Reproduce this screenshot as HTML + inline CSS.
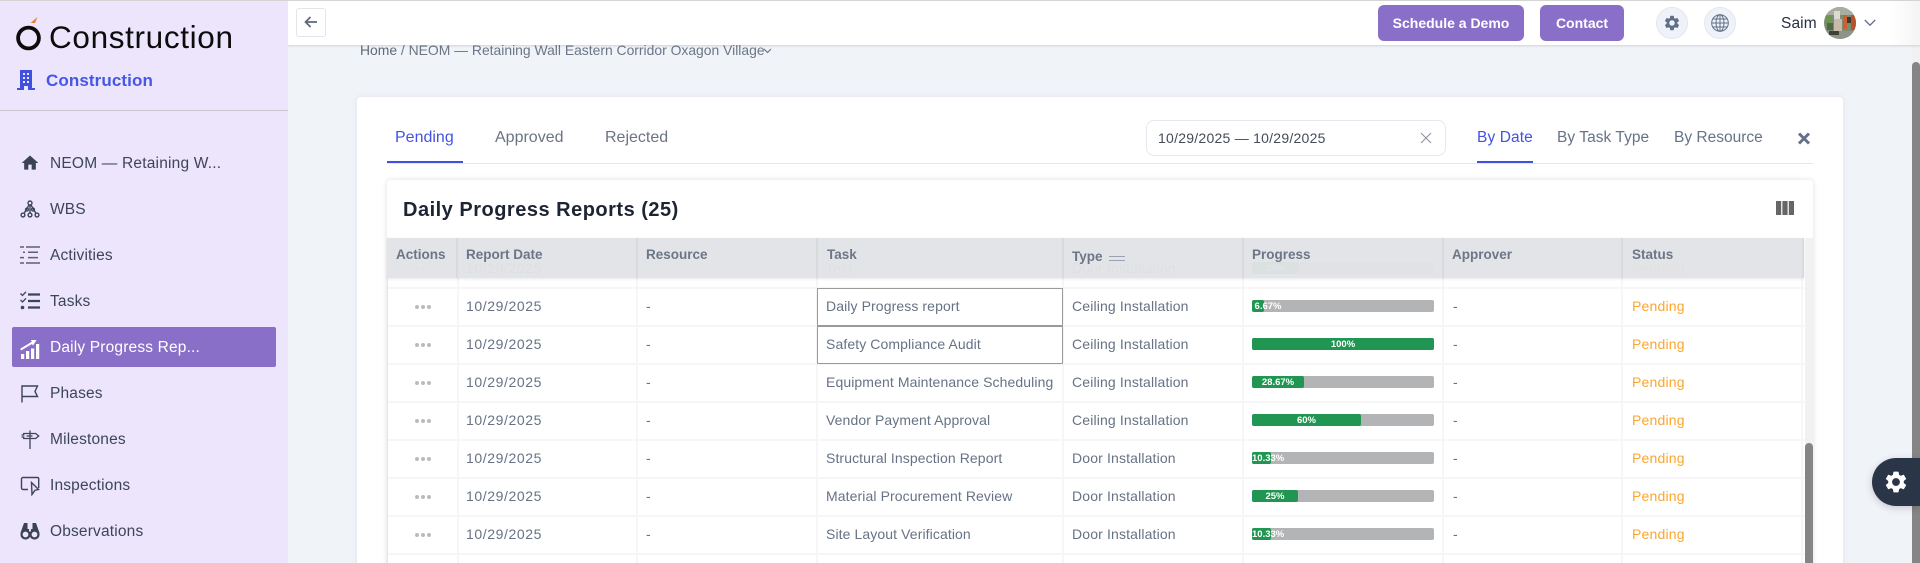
<!DOCTYPE html>
<html><head><meta charset="utf-8"><title>Daily Progress Reports</title>
<style>
html,body{margin:0;padding:0;width:1920px;height:563px;overflow:hidden;background:#f0f3f8;font-family:"Liberation Sans",sans-serif}
div,span,svg{position:absolute;box-sizing:border-box}
#root{left:0;top:0;width:1920px;height:563px;overflow:hidden;background:#f0f3f8}
.t{white-space:nowrap;line-height:20px;height:20px}
.nav{left:50px;font-size:15.5px;color:#3d4558;white-space:nowrap;line-height:20px;height:20px;letter-spacing:.17px}
.ic{left:20px;width:20px;height:20px}
.tab{top:128px;font-size:16px;color:#6b7482;white-space:nowrap;line-height:20px}
.tr{top:128px;font-size:15.5px;color:#667389;white-space:nowrap;line-height:20px}
.th{top:245px;font-size:13.5px;font-weight:bold;color:#6c7687;white-space:nowrap;line-height:20px}
.r{left:387px;width:1418px;height:38px;font-size:14px;color:#667285;line-height:36px;white-space:nowrap}
.r span{top:0;white-space:nowrap}
.a{left:79px;letter-spacing:.6px}.b{left:259px}.c{left:439px;letter-spacing:.1px}.d{left:685px;letter-spacing:.15px}.e{left:1066px}
.s{left:1245px;color:#fba62f;letter-spacing:.2px}
.g{left:865px;top:12px;width:182px;height:12px;background:#b3b4b5;border-radius:2px}
.f{left:0;top:0;height:12px;background:#219653;border-radius:2px}
.l{left:0;top:0;height:12px;line-height:13px;font-size:9.5px;font-weight:bold;color:#fff;text-align:center;white-space:nowrap}
.o{left:28px;top:17px;width:4px;height:4px;border-radius:50%;background:#bbb;box-shadow:6px 0 0 #bbb,12px 0 0 #bbb}
.v{top:238px;width:2px;height:325px;background:#f6f6f6}
.h{left:387px;width:1418px;height:2px;background:#f6f6f6}
.hs{top:238px;width:2px;height:40px;background:#d8dadd}
</style></head><body>
<div id="root">

<!-- main area -->
<div style="left:360px;top:40px;font-size:13.9px;color:#6b7687;line-height:20px;white-space:nowrap"><b style="font-weight:normal;color:#5f6a7a">Home</b> / NEOM — Retaining Wall Eastern Corridor Oxagon Village</div>
<svg style="left:763px;top:48px" width="9" height="6" viewBox="0 0 9 6"><path d="M1 1l3.5 3.5L8 1" fill="none" stroke="#6b7687" stroke-width="1.2"/></svg>

<!-- page scrollbar -->
<div style="left:1912px;top:45px;width:8px;height:518px;background:#f1f1f1"></div>
<div style="left:1912px;top:62px;width:8px;height:501px;background:#858585;border-radius:4px 4px 0 0"></div>

<!-- outer card -->
<div style="left:357px;top:97px;width:1486px;height:480px;background:#fff;border-radius:4px;box-shadow:0 0 6px rgba(60,70,110,.08)"></div>
<div style="left:387px;top:163px;width:1426px;height:1px;background:#e3e6f0"></div>
<div class="tab" style="left:395px;color:#4353e0">Pending</div>
<div style="left:387px;top:161px;width:76px;height:2px;background:#3f51e5"></div>
<div class="tab" style="left:495px">Approved</div>
<div class="tab" style="left:605px">Rejected</div>

<div style="left:1146px;top:120px;width:300px;height:36px;border:1px solid #e6e8ef;border-radius:8px;background:#fff"></div>
<div class="t" style="left:1158px;top:128px;font-size:14px;color:#444b57;letter-spacing:.25px">10/29/2025 — 10/29/2025</div>
<svg style="left:1420px;top:132px" width="12" height="12" viewBox="0 0 12 12"><path d="M1 1l10 10M11 1L1 11" stroke="#8a8f99" stroke-width="1"/></svg>

<div class="tr" style="left:1477px;color:#4353e0;letter-spacing:.1px">By Date</div>
<div style="left:1477px;top:161px;width:56px;height:2px;background:#3f51e5"></div>
<div class="tr" style="left:1557px;letter-spacing:.05px">By Task Type</div>
<div class="tr" style="left:1674px">By Resource</div>
<svg style="left:1797px;top:132px" width="14" height="13" viewBox="0 0 14 13"><path d="M2 1.5l10 10M12 1.5l-10 10" stroke="#65718a" stroke-width="3"/></svg>

<!-- inner card -->
<div style="left:387px;top:180px;width:1426px;height:400px;background:#fff;border-radius:4px;box-shadow:0 0 6px rgba(0,0,0,.13)"></div>
<div class="t" style="left:403px;top:198px;height:24px;line-height:24px;font-size:20px;font-weight:bold;color:#1d2433;letter-spacing:.5px">Daily Progress Reports (25)</div>
<svg style="left:1776px;top:201px" width="18" height="14" viewBox="0 0 18 14" fill="#666"><rect x="0" y="0" width="5.2" height="14"/><rect x="6.4" y="0" width="5.2" height="14"/><rect x="12.8" y="0" width="5.2" height="14"/></svg>

<!-- table grid lines -->
<div class="v" style="left:457px"></div><div class="v" style="left:636px"></div><div class="v" style="left:816px"></div><div class="v" style="left:1062px"></div><div class="v" style="left:1242px"></div><div class="v" style="left:1442px"></div><div class="v" style="left:1621px"></div><div class="v" style="left:1801px"></div>
<div class="h" style="top:287px"></div><div class="h" style="top:325px"></div><div class="h" style="top:363px"></div><div class="h" style="top:401px"></div><div class="h" style="top:439px"></div><div class="h" style="top:477px"></div><div class="h" style="top:515px"></div><div class="h" style="top:553px"></div>
<div style="left:387px;top:238px;width:1px;height:325px;background:#e4e4e4"></div>

<!-- row behind the sticky header -->
<div class="r" style="top:250px"><i class="o" style="position:absolute"></i><span class="a">10/29/2025</span><span class="b">-</span><span class="c">Test</span><span class="d">Door Installation</span><div class="g"><div class="f" style="width:46px"></div><div class="l" style="width:46px">25%</div></div><span class="e">-</span><span class="s">Pending</span></div>

<!-- rows -->
<div class="r" style="top:288px"><i class="o" style="position:absolute"></i><span class="a">10/29/2025</span><span class="b">-</span><span class="c">Daily Progress report</span><span class="d">Ceiling Installation</span><div class="g"><div class="f" style="width:12px"></div><div class="l" style="width:32px">6.67%</div></div><span class="e">-</span><span class="s">Pending</span></div>
<div class="r" style="top:326px"><i class="o" style="position:absolute"></i><span class="a">10/29/2025</span><span class="b">-</span><span class="c">Safety Compliance Audit</span><span class="d">Ceiling Installation</span><div class="g"><div class="f" style="width:182px"></div><div class="l" style="width:182px">100%</div></div><span class="e">-</span><span class="s">Pending</span></div>
<div class="r" style="top:364px"><i class="o" style="position:absolute"></i><span class="a">10/29/2025</span><span class="b">-</span><span class="c">Equipment Maintenance Scheduling</span><span class="d">Ceiling Installation</span><div class="g"><div class="f" style="width:52px"></div><div class="l" style="width:52px">28.67%</div></div><span class="e">-</span><span class="s">Pending</span></div>
<div class="r" style="top:402px"><i class="o" style="position:absolute"></i><span class="a">10/29/2025</span><span class="b">-</span><span class="c">Vendor Payment Approval</span><span class="d">Ceiling Installation</span><div class="g"><div class="f" style="width:109px"></div><div class="l" style="width:109px">60%</div></div><span class="e">-</span><span class="s">Pending</span></div>
<div class="r" style="top:440px"><i class="o" style="position:absolute"></i><span class="a">10/29/2025</span><span class="b">-</span><span class="c">Structural Inspection Report</span><span class="d">Door Installation</span><div class="g"><div class="f" style="width:19px"></div><div class="l" style="width:32px">10.33%</div></div><span class="e">-</span><span class="s">Pending</span></div>
<div class="r" style="top:478px"><i class="o" style="position:absolute"></i><span class="a">10/29/2025</span><span class="b">-</span><span class="c">Material Procurement Review</span><span class="d">Door Installation</span><div class="g"><div class="f" style="width:46px"></div><div class="l" style="width:46px">25%</div></div><span class="e">-</span><span class="s">Pending</span></div>
<div class="r" style="top:516px"><i class="o" style="position:absolute"></i><span class="a">10/29/2025</span><span class="b">-</span><span class="c">Site Layout Verification</span><span class="d">Door Installation</span><div class="g"><div class="f" style="width:19px"></div><div class="l" style="width:32px">10.33%</div></div><span class="e">-</span><span class="s">Pending</span></div>

<!-- task cell outlines -->
<div style="left:817px;top:288px;width:246px;height:39px;border:1px solid #9a9a9a;border-bottom-width:2px"></div>
<div style="left:817px;top:326px;width:246px;height:38px;border:1px solid #9a9a9a;border-top:0"></div>

<!-- header row -->
<div style="left:387px;top:238px;width:1417px;height:40px;background:rgba(225,227,230,.97);box-shadow:0 1px 3px rgba(0,0,0,.1)"></div>
<div class="hs" style="left:456px"></div><div class="hs" style="left:636px"></div><div class="hs" style="left:816px"></div><div class="hs" style="left:1062px"></div><div class="hs" style="left:1242px"></div><div class="hs" style="left:1442px"></div><div class="hs" style="left:1621px"></div><div class="hs" style="left:1802px"></div>
<div class="th" style="left:396px">Actions</div>
<div class="th" style="left:466px">Report Date</div>
<div class="th" style="left:646px">Resource</div>
<div class="th" style="left:827px">Task</div>
<div class="th" style="left:1072px;top:247px">Type</div>
<div style="left:1109px;top:256px;width:16px;height:5px;border-top:1.5px solid #9aa2ad;border-bottom:1.5px solid #9aa2ad"></div>
<div class="th" style="left:1252px">Progress</div>
<div class="th" style="left:1452px">Approver</div>
<div class="th" style="left:1632px">Status</div>

<!-- inner scrollbar -->
<div style="left:1805px;top:238px;width:8px;height:325px;background:#f1f1f1"></div>
<div style="left:1805px;top:443px;width:8px;height:120px;background:#858585;border-radius:4px 4px 0 0"></div>

<!-- floating settings -->
<div style="left:1872px;top:458px;width:48px;height:48px;background:#2b3548;border-radius:24px 0 0 24px;box-shadow:0 2px 8px rgba(0,0,0,.18)"></div>
<svg style="left:1883px;top:469px" width="26" height="26" viewBox="0 0 24 24"><path fill="#fff" d="M19.14 12.94c.04-.3.06-.61.06-.94 0-.32-.02-.64-.07-.94l2.03-1.58c.18-.14.23-.41.12-.61l-1.92-3.32c-.12-.22-.37-.29-.59-.22l-2.39.96c-.5-.38-1.03-.7-1.62-.94l-.36-2.54c-.04-.24-.24-.41-.48-.41h-3.84c-.24 0-.43.17-.47.41l-.36 2.54c-.59.24-1.13.57-1.62.94l-2.39-.96c-.22-.08-.47 0-.59.22L2.74 8.87c-.12.21-.08.47.12.61l2.03 1.58c-.05.3-.09.63-.09.94s.02.64.07.94l-2.03 1.58c-.18.14-.23.41-.12.61l1.92 3.32c.12.22.37.29.59.22l2.39-.96c.5.38 1.03.7 1.62.94l.36 2.54c.05.24.24.41.48.41h3.84c.24 0 .44-.17.47-.41l.36-2.54c.59-.24 1.13-.56 1.62-.94l2.39.96c.22.08.47 0 .59-.22l1.92-3.32c.12-.22.07-.47-.12-.61l-2.01-1.58zM12 15.6c-1.98 0-3.6-1.62-3.6-3.6s1.62-3.6 3.6-3.6 3.6 1.62 3.6 3.6-1.62 3.6-3.6 3.6z"/></svg>

<!-- topbar -->
<div style="left:288px;top:0;width:1632px;height:45px;background:#fff;border-top:1px solid #d4d4d4;box-shadow:0 1px 2px rgba(0,0,0,.14)"></div>
<div style="left:1890px;top:1px;width:30px;height:44px;background:linear-gradient(90deg,#fff,#f4f4f4)"></div>
<div style="left:296px;top:8px;width:30px;height:29px;border:1px solid #e3e5ea;border-radius:3px;background:#fff"></div>
<svg style="left:303px;top:14px" width="16" height="16" viewBox="0 0 16 16"><path d="M14 8H2.5M7.5 3L2.5 8l5 5" fill="none" stroke="#5c6779" stroke-width="1.7"/></svg>
<div style="left:1378px;top:5px;width:146px;height:36px;border-radius:6px;background:#8a6fc9;color:#fff;font-size:14px;font-weight:bold;text-align:center;line-height:36px">Schedule a Demo</div>
<div style="left:1540px;top:5px;width:84px;height:36px;border-radius:6px;background:#8a6fc9;color:#fff;font-size:14px;font-weight:bold;text-align:center;line-height:36px">Contact</div>
<div style="left:1656px;top:7px;width:32px;height:32px;border-radius:50%;background:#eff3f9;border:1px solid #e2e7f0"></div>
<svg style="left:1663px;top:14px" width="18" height="18" viewBox="0 0 24 24"><path fill="#5f6f86" d="M19.14 12.94c.04-.3.06-.61.06-.94 0-.32-.02-.64-.07-.94l2.03-1.58c.18-.14.23-.41.12-.61l-1.92-3.32c-.12-.22-.37-.29-.59-.22l-2.39.96c-.5-.38-1.03-.7-1.62-.94l-.36-2.54c-.04-.24-.24-.41-.48-.41h-3.84c-.24 0-.43.17-.47.41l-.36 2.54c-.59.24-1.13.57-1.62.94l-2.39-.96c-.22-.08-.47 0-.59.22L2.74 8.87c-.12.21-.08.47.12.61l2.03 1.58c-.05.3-.09.63-.09.94s.02.64.07.94l-2.03 1.58c-.18.14-.23.41-.12.61l1.92 3.32c.12.22.37.29.59.22l2.39-.96c.5.38 1.03.7 1.62.94l.36 2.54c.05.24.24.41.48.41h3.84c.24 0 .44-.17.47-.41l.36-2.54c.59-.24 1.13-.56 1.62-.94l2.39.96c.22.08.47 0 .59-.22l1.92-3.32c.12-.22.07-.47-.12-.61l-2.01-1.58zM12 15.6c-1.98 0-3.6-1.62-3.6-3.6s1.62-3.6 3.6-3.6 3.6 1.62 3.6 3.6-1.62 3.6-3.6 3.6z"/></svg>
<div style="left:1704px;top:7px;width:32px;height:32px;border-radius:50%;background:#eff3f9;border:1px solid #e2e7f0"></div>
<svg style="left:1711px;top:14px" width="18" height="18" viewBox="0 0 18 18" fill="none" stroke="#5f6f86" stroke-width="1"><circle cx="9" cy="9" r="8.3"/><ellipse cx="9" cy="9" rx="4" ry="8.3"/><path d="M9 .7v16.6M.7 9h16.6M1.8 5h14.4M1.8 13h14.4"/></svg>
<div class="t" style="left:1781px;top:14px;font-size:15.5px;color:#283044;letter-spacing:.1px">Saim</div>
<svg style="left:1824px;top:7px" width="32" height="32" viewBox="0 0 32 32"><defs><clipPath id="av"><circle cx="16" cy="16" r="16"/></clipPath></defs><g clip-path="url(#av)"><rect width="32" height="32" fill="#7d8a76"/><rect x="0" y="0" width="32" height="8" fill="#a7aea0"/><rect x="2" y="9" width="6" height="7" fill="#6f9350"/><rect x="3" y="16" width="6" height="7" fill="#4f6a42"/><rect x="10" y="4" width="6" height="8" fill="#dcd8d2"/><rect x="10" y="12" width="8" height="13" fill="#c9b8ac"/><rect x="19" y="8" width="4" height="14" fill="#c9622e"/><rect x="23" y="10" width="4" height="6" fill="#3f3a30"/><rect x="27" y="8" width="5" height="15" fill="#b5542a"/><rect x="0" y="24" width="32" height="8" fill="#8d948a"/><rect x="5" y="24" width="10" height="4" fill="#3c4238"/></g></svg>
<svg style="left:1864px;top:19px" width="12" height="8" viewBox="0 0 12 8"><path d="M.8 1l5.2 5.2L11.2 1" fill="none" stroke="#5f6f86" stroke-width="1.3"/></svg>

<!-- sidebar -->
<div style="left:0;top:0;width:288px;height:563px;background:#ece5fc;border-top:1px solid #d4d4d4"></div>
<svg style="left:15px;top:15px" width="30" height="38" viewBox="0 0 30 38"><circle cx="13.500" cy="23" r="10.400" fill="none" stroke="#0c0c0c" stroke-width="3.800"/><path d="M15.500 8l7-6-2.500 6z" fill="#ee7d2a"/></svg>
<div class="t" style="left:49px;top:17px;height:40px;line-height:40px;font-size:31.500px;color:#0c0c0c;letter-spacing:.65px">Construction</div>
<svg style="left:17px;top:70px" width="18" height="20" viewBox="0 0 18 20"><path fill="#3f51e0" fill-rule="evenodd" d="M3 0h12v18h3v2h-7v-4H7v4H0v-2h3zM6 3v2h2V3zm4 0v2h2V3zM6 7v2h2V7zm4 0v2h2V7zM6 11v2h2v-2zm4 0v2h2v-2z"/></svg>
<div class="t" style="left:46px;top:71px;font-size:17px;font-weight:bold;color:#4656e6;letter-spacing:.1px">Construction</div>
<div style="left:0;top:110px;width:288px;height:1px;background:#c9c6cf"></div>

<div style="left:12px;top:327px;width:264px;height:40px;background:#8a6fc9;border-radius:2px"></div>

<svg class="ic" style="top:153px" viewBox="0 0 24 24"><path fill="#3a4254" d="M10 20v-6h4v6h5v-8h3L12 3 2 12h3v8z"/></svg>
<div class="nav" style="top:154px;letter-spacing:.2px">NEOM — Retaining W...</div>

<svg class="ic" style="top:199px" viewBox="0 0 20 20" fill="none" stroke="#3d4558" stroke-width="1.4"><circle cx="10" cy="4" r="2"/><circle cx="3" cy="16" r="1.9"/><circle cx="10" cy="16" r="1.9"/><circle cx="17" cy="16" r="1.9"/><circle cx="7" cy="10.5" r="1.4"/><circle cx="13" cy="10.5" r="1.4"/><path d="M9 6l-5 8.5M11 6l5 8.5M10 6v8"/></svg>
<div class="nav" style="top:200px">WBS</div>

<svg class="ic" style="top:246px" viewBox="0 0 20 20" stroke="#5b6072" stroke-width="1.5"><path d="M0 1h4M6 1h14M3 6.3h2M8 6.3h10M0 11.6h4M8 11.6h10M0 17h4M6 17h14"/></svg>
<div class="nav" style="top:246px">Activities</div>

<svg class="ic" style="top:291px" viewBox="0 0 20 20" fill="none" stroke="#3d4558"><path d="M8 3.5h12M8 10h12M8 16.5h12" stroke-width="2.2"/><path d="M.5 2.5l2 2L6 .8M.5 9l2 2L6 7.3" stroke-width="1.3"/><circle cx="2.5" cy="16.5" r="1.8" fill="#3d4558" stroke="none"/></svg>
<div class="nav" style="top:292px">Tasks</div>

<svg class="ic" style="top:339px" viewBox="0 0 20 20" fill="#fff"><rect x="1" y="15" width="3.2" height="5"/><rect x="6" y="12" width="3.2" height="8"/><rect x="11" y="9.5" width="3.2" height="10.5"/><rect x="16" y="5" width="3.2" height="15"/><path d="M1 11.5L12 5l1 1.6 3.5-5.6L10.8 1l1 1.7L.3 9.6z"/></svg>
<div class="nav" style="top:338px;color:#fff">Daily Progress Rep...</div>

<svg class="ic" style="top:384px" viewBox="0 0 20 20" fill="none" stroke="#3d4558" stroke-width="1.4"><path d="M2 18.5V2h15.5l-2.5 5.5 2.5 5H2"/></svg>
<div class="nav" style="top:384px">Phases</div>

<svg class="ic" style="top:430px" viewBox="0 0 20 20" fill="none" stroke="#3d4558" stroke-width="1.3"><path d="M10 .5v18.500M1.500 5h2.200v-1.500h12L18.700 6l-3 2.500h-12V7H1.500M6.500 6h6"/></svg>
<div class="nav" style="top:430px">Milestones</div>

<svg class="ic" style="top:476px" viewBox="0 0 20 20" fill="none" stroke="#3d4558" stroke-width="1.4"><path d="M8 13.500H3a1.500 1.500 0 0 1-1.500-1.500V3A1.500 1.500 0 0 1 3 1.500h14.500A1.200 1.200 0 0 1 18.700 3v9"/><path d="M11.500 6.500l7 7-3.500.7-3 4.300z"/></svg>
<div class="nav" style="top:476px">Inspections</div>

<svg class="ic" style="top:521px" viewBox="0 0 20 20"><path fill="#3a4254" d="M4 2h3.500v6H9v3h2V8h1.500V2H16l3.500 10H.5z"/><circle cx="5.500" cy="13.500" r="4" fill="#ece5fc" stroke="#3a4254" stroke-width="2.200"/><circle cx="14.500" cy="13.500" r="4" fill="#ece5fc" stroke="#3a4254" stroke-width="2.200"/></svg>
<div class="nav" style="top:522px">Observations</div>

</div>
</body></html>
